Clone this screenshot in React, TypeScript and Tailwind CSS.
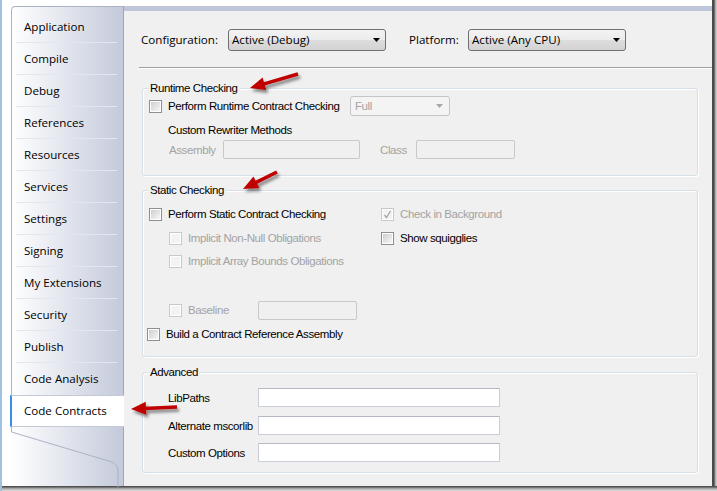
import React from "react";

const tabs = [
  "Application",
  "Compile",
  "Debug",
  "References",
  "Resources",
  "Services",
  "Settings",
  "Signing",
  "My Extensions",
  "Security",
  "Publish",
  "Code Analysis",
  "Code Contracts",
];

function CheckBox({ disabled, checked }: { disabled?: boolean; checked?: boolean }) {
  return (
    <span
      className={
        disabled
          ? "relative flex h-[13px] w-[13px] shrink-0 items-center justify-center border border-[#c9c9c9] bg-white"
          : "relative flex h-[13px] w-[13px] shrink-0 items-center justify-center border border-[#8e8f8f] bg-white"
      }
    >
      <span
        className={
          disabled
            ? "h-[9px] w-[9px] bg-[#f3f3f3]"
            : "h-[9px] w-[9px] bg-[linear-gradient(135deg,#cfcfcf,#f6f6f6)]"
        }
      />
      {checked && (
        <svg className="absolute left-0 top-0" width="11" height="11" viewBox="0 0 11 11">
          <path d="M2.5 6 L4.5 8.5 L8.5 2" fill="none" stroke="#a8a8a8" strokeWidth="1.3" />
        </svg>
      )}
    </span>
  );
}

function DownArrow({ color }: { color: string }) {
  return (
    <svg width="7" height="4" viewBox="0 0 7 4">
      <path d="M0 0 H7 L3.5 4 Z" fill={color} />
    </svg>
  );
}

function GroupBox({ title, children, className }: { title: string; children: React.ReactNode; className: string }) {
  return (
    <div
      className={
        "relative ml-[18px] w-[556px] whitespace-nowrap rounded-[3px] border border-[#d5dfe5] font-['Liberation_Sans',Arial,sans-serif] text-[11.5px] tracking-[-0.4px] shadow-[inset_1px_1px_0_#ffffff,1px_1px_0_#ffffff] " +
        className
      }
    >
      <span className="absolute left-[5px] top-[-9px] bg-[#f0f0f0] px-[2px] leading-[16px]">{title}</span>
      {children}
    </div>
  );
}

function Arrow({ x1, y1, x2, y2 }: { x1: number; y1: number; x2: number; y2: number }) {
  const dx = x2 - x1;
  const dy = y2 - y1;
  const L = Math.hypot(dx, dy);
  const ux = dx / L;
  const uy = dy / L;
  const nx = -uy;
  const ny = ux;
  const hl = 15;
  const hw = 6.5;
  const bx = x2 - ux * hl;
  const by = y2 - uy * hl;
  return (
    <g filter="url(#arrowShadow)">
      <line x1={x1} y1={y1} x2={bx + ux * 2} y2={by + uy * 2} stroke="#c00000" strokeWidth="3.6" />
      <polygon
        points={`${x2},${y2} ${bx + nx * hw},${by + ny * hw} ${bx - nx * hw},${by - ny * hw}`}
        fill="#c00000"
      />
    </g>
  );
}

export default function App() {
  return (
    <div className="relative flex h-[491px] w-[717px] flex-col overflow-hidden border-l-2 border-[#9fc1e2] bg-white font-['Open_Sans',sans-serif] text-[11.6px] leading-[16px] text-black">
      <div className="flex h-[486px]">
        <div className="flex w-[710px] flex-col">
          <div className="h-[6px] bg-white" />
          <div className="flex flex-1">
            {/* Left tab column */}
            <div className="flex w-[121px] bg-white">
              <div className="ml-[9px] flex w-[112px] flex-col rounded-tl-[4px] border-t border-[#aab2c4] bg-[linear-gradient(to_right,#ffffff,#c4cadb)]">
                <div className="flex flex-col rounded-tl-[4px] border-l border-[#aab2c4] pt-[4px]">
                  {tabs.map((t, i) => {
                    const selected = t === "Code Contracts";
                    if (selected) {
                      return (
                        <div
                          key={t}
                          className="relative z-10 -ml-[2px] -mr-[1px] flex h-[32px] items-center border-y border-l-2 border-y-[#c3c9d6] border-l-[#3a8ee6] bg-white pl-[12px]"
                        >
                          {t}
                        </div>
                      );
                    }
                    const beforeSelected = i === tabs.length - 2;
                    return (
                      <div key={t} className="flex h-[32px] flex-col">
                        <div className="flex flex-1 items-center pl-[12px]">{t}</div>
                        {!beforeSelected && <div className="ml-[4px] mr-[6px] h-px bg-[#e3e6ee]" />}
                      </div>
                    );
                  })}
                </div>
                <div className="relative flex-1">
                  <svg className="absolute left-0 top-0" width="112" height="60" viewBox="0 0 112 60">
                    <path
                      d="M0.5 0 L0.5 5 L101 35 Q107 37 107 45 L107 60"
                      fill="none"
                      stroke="#aab2c4"
                      strokeWidth="1"
                    />
                  </svg>
                </div>
              </div>
            </div>

            {/* Content panel */}
            <div className="flex w-[589px] flex-col border-l border-[#9ea6ba] bg-[#f0f0f0]">
              <div className="h-[5px] bg-[#bfc6da]" />

              {/* Configuration row */}
              <div className="mt-[18px] flex h-[22px] items-center pl-[17px]">
                <span className="w-[87px]">Configuration:</span>
                <div className="flex h-[22px] w-[158px] items-center justify-between rounded-[3px] border border-[#707070] bg-[linear-gradient(to_bottom,#f3f3f3_0%,#ebebeb_50%,#dddddd_51%,#d3d3d3_100%)] pl-[3px] pr-[5px]">
                  <span>Active (Debug)</span>
                  <DownArrow color="#000000" />
                </div>
                <span className="ml-[23px] w-[59px]">Platform:</span>
                <div className="flex h-[22px] w-[158px] items-center justify-between rounded-[3px] border border-[#707070] bg-[linear-gradient(to_bottom,#f3f3f3_0%,#ebebeb_50%,#dddddd_51%,#d3d3d3_100%)] pl-[3px] pr-[5px]">
                  <span>Active (Any CPU)</span>
                  <DownArrow color="#000000" />
                </div>
              </div>

              <div className="ml-[15px] mt-[16px] h-[2px] border-t border-b border-t-[#a0a0a0] border-b-white" />

              {/* Runtime Checking */}
              <GroupBox title="Runtime Checking" className="mt-[19px] pb-[16px] pt-[7px]">
                <div className="flex h-[20px] items-center pl-[6px]">
                  <div className="flex w-[201px] items-center gap-[6px]">
                    <CheckBox />
                    <span>Perform Runtime Contract Checking</span>
                  </div>
                  <div className="flex h-[20px] w-[100px] items-center justify-between rounded-[3px] border border-[#c6c6c6] bg-[#f4f4f4] pl-[4px] pr-[6px] text-[#a3a3a3]">
                    <span>Full</span>
                    <DownArrow color="#a8a8a8" />
                  </div>
                </div>
                <div className="ml-[25px] mt-[6px]">Custom Rewriter Methods</div>
                <div className="ml-[26px] mt-[2px] flex h-[19px] items-center text-[#a3a3a3]">
                  <span className="w-[54px]">Assembly</span>
                  <div className="h-[19px] w-[137px] rounded-[2px] border border-[#c8c8c8] bg-[#f0f0f0]" />
                  <span className="ml-[20px] w-[36px]">Class</span>
                  <div className="h-[19px] w-[99px] rounded-[2px] border border-[#c8c8c8] bg-[#f0f0f0]" />
                </div>
              </GroupBox>

              {/* Static Checking */}
              <GroupBox title="Static Checking" className="mt-[14px] pb-[12px] pt-[13px]">
                <div className="flex">
                  <div className="flex w-[238px] flex-col pl-[6px]">
                    <div className="flex h-[20px] items-center gap-[6px]">
                      <CheckBox />
                      <span>Perform Static Contract Checking</span>
                    </div>
                    <div className="ml-[20px] mt-[4px] flex h-[20px] items-center gap-[6px] text-[#a3a3a3]">
                      <CheckBox disabled />
                      <span>Implicit Non-Null Obligations</span>
                    </div>
                    <div className="ml-[20px] mt-[3px] flex h-[20px] items-center gap-[6px] text-[#a3a3a3]">
                      <CheckBox disabled />
                      <span>Implicit Array Bounds Obligations</span>
                    </div>
                    <div className="ml-[20px] mt-[29px] flex h-[20px] items-center text-[#a3a3a3]">
                      <div className="flex w-[89px] items-center gap-[6px]">
                        <CheckBox disabled />
                        <span>Baseline</span>
                      </div>
                      <div className="h-[19px] w-[99px] rounded-[2px] border border-[#c8c8c8] bg-[#f0f0f0]" />
                    </div>
                    <div className="-ml-[2px] mt-[4px] flex h-[20px] items-center gap-[6px]">
                      <CheckBox />
                      <span>Build a Contract Reference Assembly</span>
                    </div>
                  </div>
                  <div className="flex flex-col">
                    <div className="flex h-[20px] items-center gap-[6px] text-[#a3a3a3]">
                      <CheckBox disabled checked />
                      <span>Check in Background</span>
                    </div>
                    <div className="mt-[4px] flex h-[20px] items-center gap-[6px]">
                      <CheckBox />
                      <span>Show squigglies</span>
                    </div>
                  </div>
                </div>
              </GroupBox>

              {/* Advanced */}
              <GroupBox title="Advanced" className="mt-[15px] pb-[10px] pt-[15px]">
                <div className="ml-[25px] flex h-[19px] items-center">
                  <span className="w-[90px]">LibPaths</span>
                  <div className="h-[19px] w-[242px] border border-[#c9ced8] border-t-[#b5b9c2] bg-white" />
                </div>
                <div className="ml-[25px] mt-[9px] flex h-[19px] items-center">
                  <span className="w-[90px]">Alternate mscorlib</span>
                  <div className="h-[19px] w-[242px] border border-[#c9ced8] border-t-[#b5b9c2] bg-white" />
                </div>
                <div className="ml-[25px] mt-[8px] flex h-[19px] items-center">
                  <span className="w-[90px]">Custom Options</span>
                  <div className="h-[19px] w-[242px] border border-[#c9ced8] border-t-[#b5b9c2] bg-white" />
                </div>
              </GroupBox>
            </div>
          </div>
        </div>
        <div className="w-[5px] bg-[linear-gradient(to_right,#4a4a4a_0px,#4a4a4a_2px,#9a9a9a_3px,#dadada_5px)]" />
      </div>
      <div className="h-[5px] bg-[linear-gradient(to_bottom,#505050_0px,#505050_1px,#9a9a9a_2px,#e0e0e0_5px)]" />

      {/* Annotation arrows */}
      <svg className="pointer-events-none absolute left-[-2px] top-0" width="717" height="491" viewBox="0 0 717 491">
        <defs>
          <filter id="arrowShadow" x="-50%" y="-50%" width="200%" height="200%">
            <feDropShadow dx="2" dy="3" stdDeviation="1.8" floodColor="#000000" floodOpacity="0.45" />
          </filter>
        </defs>
        <Arrow x1={298} y1={74} x2={250} y2={88} />
        <Arrow x1={277} y1={172} x2={243} y2={189} />
        <Arrow x1={177} y1={407} x2={131} y2={409} />
      </svg>
    </div>
  );
}
